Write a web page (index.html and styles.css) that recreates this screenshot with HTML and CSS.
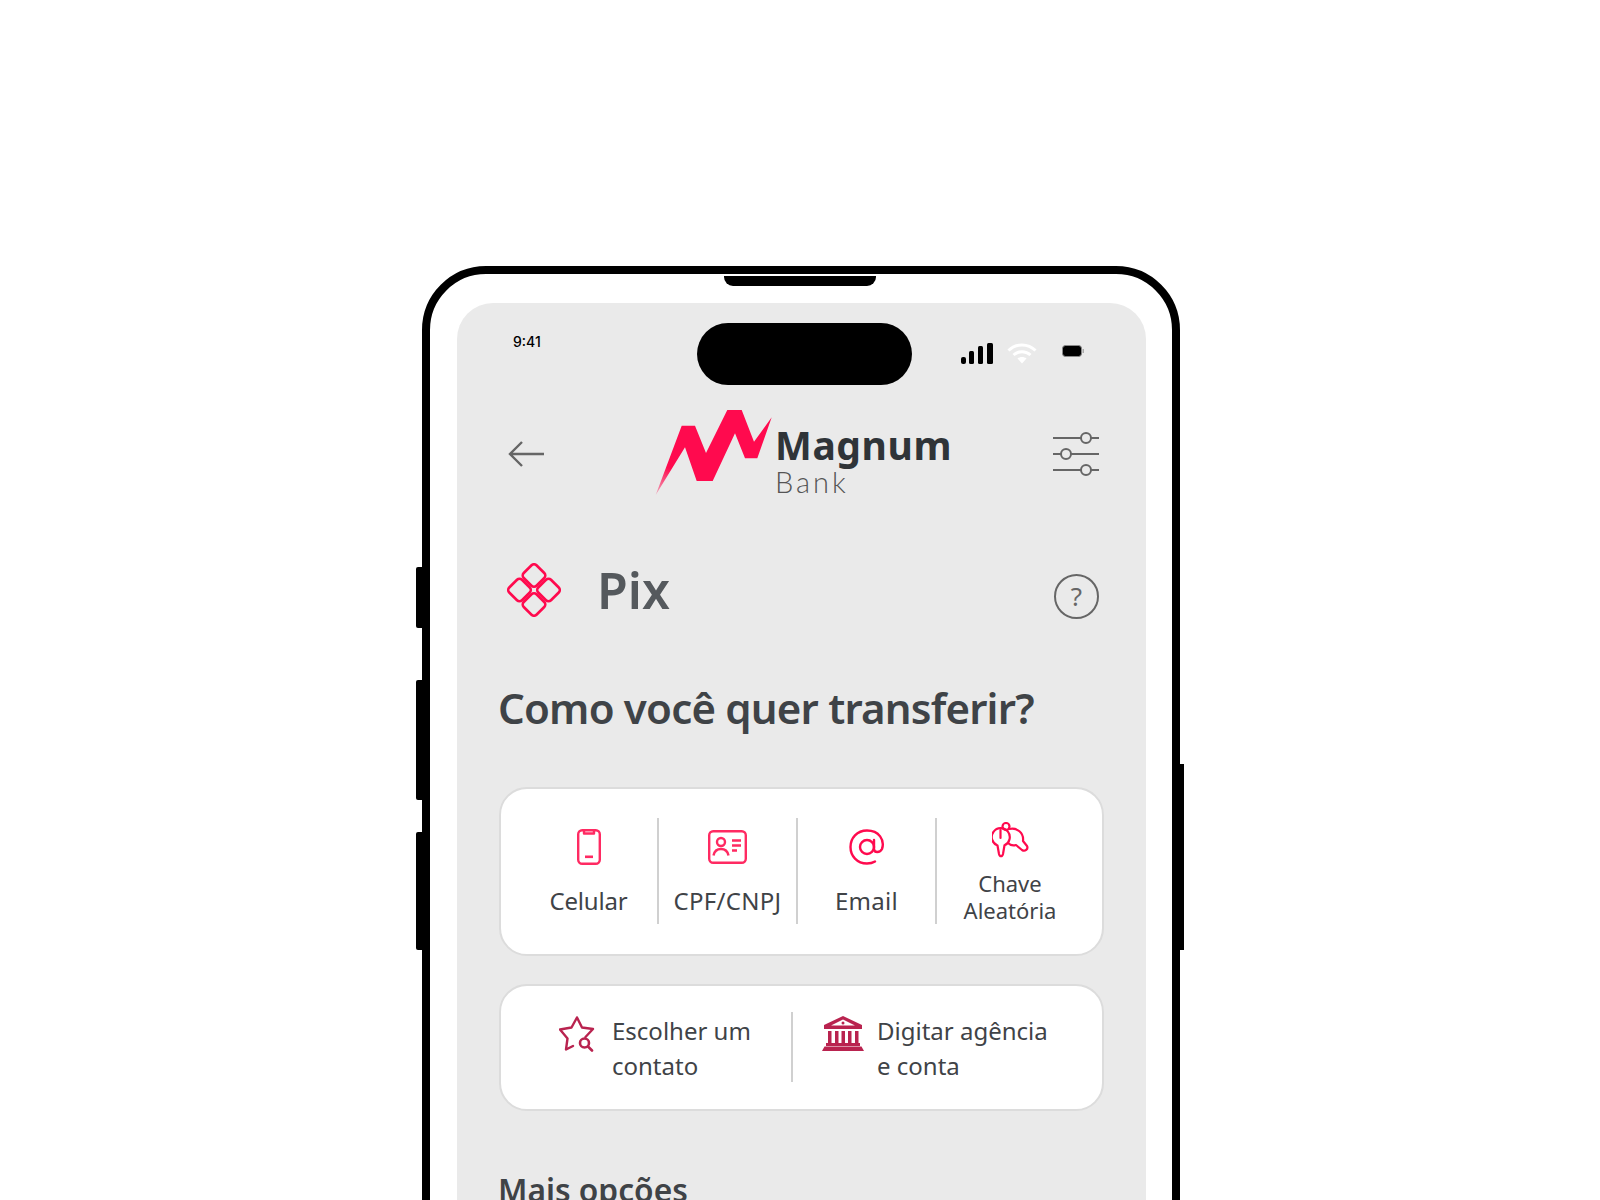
FILE: index.html
```html
<!DOCTYPE html>
<html lang="pt-BR">
<head>
<meta charset="utf-8">
<title>Magnum Bank Pix</title>
<link rel="stylesheet" href="styles.css">
</head>
<body>
<div class="stage">
  <div class="phone">
    <span class="side side-a"></span>
    <span class="side side-b"></span>
    <span class="side side-c"></span>
    <span class="side side-d"></span>
    <span class="speaker"></span>
    <main class="screen">
      <span class="island"></span>
      <div class="status">
        <span class="time">9:41</span>
        <div class="status-icons">
          <svg width="32" height="21" viewBox="0 0 32 21"><g fill="#000"><rect x="0" y="14" width="5" height="7" rx="2"/><rect x="8" y="8" width="5" height="13" rx="1.5"/><rect x="17" y="3" width="5" height="18" rx="1.5"/><rect x="26" y="0" width="6" height="21" rx="1.5"/></g></svg>
          <svg width="30" height="21" viewBox="0 0 30 21"><g fill="none" stroke="#fff" stroke-width="3"><path d="M1.5 7.5C9 0 21 0 28.500 7.500"/><path d="M6.500 12C11.500 7.500 18.500 7.500 23.500 12"/></g><path d="M10.500 15.500C13 13.500 17 13.500 19.500 15.500L15 20.500Z" fill="#fff"/></svg>
          <svg class="battery" width="22" height="12" viewBox="0 0 22 12"><rect x=".5" y=".5" width="19" height="11" rx="3" fill="#000" stroke="#8a8a8a"/><rect x="20.500" y="4" width="1.500" height="4" fill="#aaa"/></svg>
        </div>
      </div>

      <header class="topbar">
        <svg class="back" width="36" height="26" viewBox="0 0 36 26"><path d="M36 13H2M14 1 2 13l12 12" fill="none" stroke="#666" stroke-width="2.400"/></svg>
        <div class="logo">
          <svg width="117" height="85" viewBox="655 410 117 85">
            <defs><linearGradient id="bolt" gradientUnits="userSpaceOnUse" x1="656" y1="495" x2="669" y2="468"><stop offset="0" stop-color="#ff0a4e" stop-opacity=".3"/><stop offset="1" stop-color="#ff0a4e"/></linearGradient></defs>
            <path d="M655.700 495 681.700 425.700H695L706 453 727.300 410H741.700L754 441.700 771.700 417.300 757.300 458.300H745L735 433.300 712.700 481H696.700L685 447.300Z" fill="url(#bolt)"/>
          </svg>
          <div class="wordmark"><span class="magnum">Magnum</span><span class="bank">Bank</span></div>
        </div>
        <svg class="sliders" width="46" height="44" viewBox="0 0 46 44"><g fill="none" stroke="#666" stroke-width="2"><path d="M0 6H28M38 6H46M0 22H8M18 22H46M0 38H28M38 38H46"/><circle cx="33" cy="6" r="5"/><circle cx="13" cy="22" r="5"/><circle cx="33" cy="38" r="5"/></g></svg>
      </header>

      <section class="pix-row">
        <svg width="54" height="54" viewBox="0 0 54 54"><g fill="none" stroke="#ff0a4e" stroke-width="2.600" stroke-linejoin="round"><rect x="18" y="3.500" width="18" height="18" rx="3.500" transform="rotate(45 27 12.500)"/><rect x="18" y="32.500" width="18" height="18" rx="3.500" transform="rotate(45 27 41.500)"/><rect x="3.500" y="18" width="18" height="18" rx="3.500" transform="rotate(45 12.500 27)"/><rect x="32.500" y="18" width="18" height="18" rx="3.500" transform="rotate(45 41.500 27)"/></g></svg>
        <h1 class="pix-title">Pix</h1>
        <span class="help">?</span>
      </section>

      <h2 class="question">Como você quer transferir?</h2>

      <section class="card keys">
        <div class="key-item">
          <div class="key-icon"><svg width="24" height="36" viewBox="0 0 24 36"><g fill="none" stroke="#ff2a62" stroke-width="2.400" stroke-linejoin="round"><rect x="1.200" y="1.200" width="21.600" height="33.600" rx="4"/><path d="M7 1.500V4.500H17V1.500"/><path d="M8 27.800H16" stroke-width="2.600"/></g></svg></div>
          <span class="key-label">Celular</span>
        </div>
        <div class="key-item">
          <div class="key-icon"><svg width="39" height="34" viewBox="0 0 39 34"><g fill="none" stroke="#ff2a62" stroke-width="2.400"><rect x="1.200" y="1.200" width="36.600" height="31.600" rx="4"/><circle cx="13" cy="12" r="4"/><path d="M5.500 25.500C6.500 20.500 10 19 13 19s6.500 1.500 7.500 6.500M24 10.500H33M24 15.500H33M24 20.500H29"/></g></svg></div>
          <span class="key-label key-label-wide">CPF/CNPJ</span>
        </div>
        <div class="key-item">
          <div class="key-icon"><svg width="36" height="36" viewBox="0 0 36 36"><g fill="none" stroke="#ff0a4e" stroke-width="2.400" stroke-linecap="round"><circle cx="18" cy="18" r="7"/><path d="M25 11V20C25 24 31 24 33 20C36 11 30 1.500 18 1.500C8 1.500 1.500 9 1.500 18S8 34.500 18 34.500C21 34.500 24 33.700 26 32.500"/></g></svg></div>
          <span class="key-label key-label-wide">Email</span>
        </div>
        <div class="key-item key-last">
          <div class="key-icon"><svg width="37" height="36" viewBox="0 0 37 36"><g fill="none" stroke="#ff0a4e" stroke-width="2.200" stroke-linejoin="round" stroke-linecap="round"><path d="M5.500 23.500A9 9 0 1 1 12.500 23.300L11 32C10.300 35 7.700 35 7 32Z"/><path d="M8.500 8V16"/><circle cx="14" cy="4.500" r="3.500"/><path d="M17.500 7C25 5.500 32 10.500 31 19L35 24C36.500 27 33 30 30 28L24 23C21 24 18 23 16 21"/></g></svg></div>
          <span class="key-label">Chave<br>Aleatória</span>
        </div>
      </section>

      <section class="card actions">
        <div class="action action-contact">
          <svg width="36" height="36" viewBox="0 0 36 36"><g fill="none" stroke="#b9234f" stroke-width="2.400" stroke-linejoin="round" stroke-linecap="round"><path d="M18 1.500 23 11.500 34 13 26.500 21M14 30 7 33.500 8.500 22.500 1 13.500 12.500 11.500 18 1.500"/><circle cx="25.500" cy="27" r="4.500" stroke-width="2.600"/><path d="M29 30.500 33 34.500" stroke-width="2.600"/></g></svg>
          <span class="action-label">Escolher um<br>contato</span>
        </div>
        <div class="action action-bank">
          <svg width="42" height="35" viewBox="0 0 42 35"><g fill="#b9234f"><path d="M21 0 40 9V13H2V9ZM21 3.500 9 9.500H33Z" fill-rule="evenodd"/><circle cx="21" cy="7" r="1.500"/><rect x="6" y="15" width="3.500" height="12"/><rect x="13" y="15" width="3.500" height="12"/><rect x="19.500" y="15" width="3.500" height="12"/><rect x="26" y="15" width="3.500" height="12"/><rect x="33" y="15" width="3.500" height="12"/><rect x="4" y="27" width="34" height="3"/><path d="M2.500 30.500H39.500L42 35H0Z"/></g></svg>
          <span class="action-label">Digitar agência<br>e conta</span>
        </div>
      </section>

      <h2 class="more">Mais opções</h2>
    </main>
  </div>
</div>
</body>
</html>
```
FILE: styles.css
```css
* { box-sizing: border-box; }
html, body { margin: 0; height: 1200px; overflow: hidden; background: #fff; }
body { font-family: "Noto Sans", sans-serif; color: #3f4347; }
h1, h2 { margin: 0; }
svg { display: block; flex: none; }

.stage { padding: 266px 0 0 422px; }
.phone {
  position: relative;
  width: 758px;
  height: 1100px;
  padding: 29px 26px 0 27px;
  border: 8px solid #000;
  border-radius: 64px;
  background: #fff;
}
.side { position: absolute; background: #000; }
.side-a { left: -14px; top: 293px; width: 8px; height: 61px; border-radius: 2px 0 0 2px; }
.side-b { left: -14px; top: 406px; width: 8px; height: 120px; border-radius: 2px 0 0 2px; }
.side-c { left: -14px; top: 558px; width: 8px; height: 118px; border-radius: 2px 0 0 2px; }
.side-d { right: -12px; top: 490px; width: 4px; height: 186px; }
.speaker {
  position: absolute;
  left: 294px;
  top: 2px;
  width: 152px;
  height: 10px;
  border-radius: 0 0 9px 9px;
  background: #000;
}

.screen {
  position: relative;
  height: 1000px;
  padding: 0 42px;
  border-radius: 36px 36px 0 0;
  background: #eaeaea;
}
.island {
  position: absolute;
  left: 240px;
  top: 20px;
  width: 215px;
  height: 62px;
  border-radius: 31px;
  background: #000;
}

.status {
  display: flex;
  justify-content: space-between;
  height: 101px;
  padding: 29px 20px 0 14px;
}
.time {
  font: 500 14px/20px Inter, sans-serif;
  color: #000;
}
.status-icons { display: flex; align-items: flex-start; gap: 14px; padding-top: 11px; }
.status-icons .battery { margin: 2px 0 0 11px; }

.topbar { display: flex; align-items: center; height: 100px; padding: 0 5px 0 9px; }
.back { margin-right: 111px; }
.logo { display: flex; gap: 3px; margin: 0 auto 1px 0; }
.wordmark { display: flex; flex-direction: column; }
.magnum {
  margin-top: 13px;
  font-size: 39px;
  line-height: 44px;
  font-weight: 700;
  letter-spacing: .6px;
  color: #2f3438;
}
.bank {
  margin-top: 0;
  font: 300 29px/30px Lato, sans-serif;
  letter-spacing: 3px;
  color: #555;
}

.pix-row { display: flex; align-items: center; height: 60px; margin-top: 56px; padding: 0 5px 0 8px; }
.pix-title {
  margin-left: 36px;
  font-size: 50px;
  line-height: 60px;
  font-weight: 600;
  color: #55595d;
}
.help {
  display: flex;
  align-items: center;
  justify-content: center;
  width: 45px;
  height: 45px;
  margin: 12px 0 0 auto;
  border: 2px solid #666;
  border-radius: 50%;
  font-size: 26px;
  color: #666;
}

.question {
  margin: 60px 0 0 -1px;
  font-size: 42px;
  line-height: 56px;
  font-weight: 600;
  letter-spacing: -.8px;
  color: #3f4347;
}

.card {
  display: flex;
  background: #fff;
  border: 2px solid #dcdcdc;
  border-radius: 28px;
}
.keys { height: 169px; margin-top: 51px; padding: 29px 0 30px 19px; }
.key-item {
  display: flex;
  flex-direction: column;
  align-items: center;
  width: 139px;
  padding-top: 11px;
  border-right: 2px solid #d0d0d0;
}
.key-icon { display: flex; align-items: center; height: 36px; }
.key-last { flex: 1; padding-top: 4px; padding-right: 19px; border-right: 0; }
.key-label {
  margin-top: 19px;
  font-size: 24px;
  line-height: 34px;
  letter-spacing: -.2px;
  color: #3f4347;
}
.key-label-wide { letter-spacing: .3px; }
.key-last .key-label { margin-top: 12px; font-size: 22px; line-height: 27px; letter-spacing: 0; text-align: center; }

.actions { height: 127px; margin-top: 28px; padding: 26px 0 27px; }
.action { display: flex; align-items: flex-start; }
.action svg { margin-top: 4px; }
.action-contact { width: 292px; padding-left: 58px; gap: 17px; border-right: 2px solid #d0d0d0; }
.action-bank { padding-left: 29px; gap: 13px; }
.action-label { margin-top: 1px; font-size: 24px; line-height: 35px; color: #3f4347; }

.more {
  margin: 59px 0 0 -1px;
  font-size: 31.700px;
  line-height: 40px;
  font-weight: 600;
  color: #3f4347;
}
```
